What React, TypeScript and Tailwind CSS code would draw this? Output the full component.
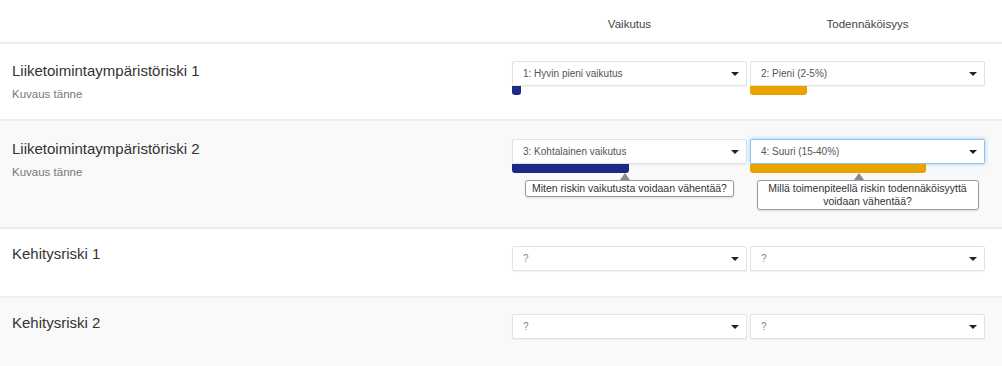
import React from "react";

type Opt = { text: string; placeholder?: boolean; bar?: number; color?: string; focus?: boolean };

function Caret() {
  return (
    <span className="w-0 h-0 border-l-[4px] border-r-[4px] border-t-[4px] border-l-transparent border-r-transparent border-t-[#222]" />
  );
}

function Select({ o }: { o: Opt }) {
  return (
    <div className="flex flex-col w-[235px]">
      <div
        className={
          "h-[25px] w-full flex items-center justify-between pl-[10px] pr-[7px] rounded-[2px] bg-white border " +
          (o.focus
            ? "border-[#8cc4ef] shadow-[0_0_4px_rgba(102,175,233,0.6)]"
            : "border-[#e2e2e2] shadow-[0_1px_1px_rgba(0,0,0,0.06)]")
        }
      >
        <span className={"text-[10px] " + (o.placeholder ? "text-[#888]" : "text-[#555]")}>{o.text}</span>
        <Caret />
      </div>
      {o.bar !== undefined && (
        <div className={"h-[9px] rounded-b-[3px] " + o.color} style={{ width: o.bar }} />
      )}
    </div>
  );
}

function Tooltip({ text, width, arrowLeft }: { text: React.ReactNode; width: number; arrowLeft: number }) {
  return (
    <div className="flex flex-col w-[235px]">
      <div
        className="w-0 h-0 border-l-[5px] border-r-[5px] border-b-[7px] border-l-transparent border-r-transparent border-b-[#8a8a8a]"
        style={{ marginLeft: arrowLeft }}
      />
      <div
        className="self-center bg-white border border-[#9a9a9a] rounded-[3px] py-[1px] text-center text-[10.5px] leading-[13px] text-[#333] shadow-[0_1px_2px_rgba(0,0,0,0.12)]"
        style={{ width }}
      >
        {text}
      </div>
    </div>
  );
}

function Row({
  title,
  desc,
  a,
  b,
  h,
  bg,
  padTitle,
  padSel,
  tips,
  border = true,
}: {
  title: string;
  desc?: string;
  a: Opt;
  b: Opt;
  h: number;
  bg: string;
  padTitle: number;
  padSel: number;
  tips?: boolean;
  border?: boolean;
}) {
  return (
    <div
      className={"flex " + bg + (border ? " border-b-2 border-[#eeeeee]" : "")}
      style={{ height: h }}
    >
      <div className="w-[512px] pl-[12px]" style={{ paddingTop: padTitle }}>
        <div className="text-[15px] leading-[17px] text-[#333]">{title}</div>
        {desc && <div className="mt-[9px] text-[11.5px] leading-[13px] text-[#777]">{desc}</div>}
      </div>
      <div className="flex flex-col" style={{ paddingTop: padSel }}>
        <div className="flex gap-[3px]">
          <Select o={a} />
          <Select o={b} />
        </div>
        {tips && (
          <div className="flex gap-[3px]">
            <Tooltip text="Miten riskin vaikutusta voidaan vähentää?" width={209} arrowLeft={108} />
            <Tooltip
              text={
                <>
                  Millä toimenpiteellä riskin todennäköisyyttä
                  <br />
                  voidaan vähentää?
                </>
              }
              width={222}
              arrowLeft={104}
            />
          </div>
        )}
      </div>
    </div>
  );
}

export default function App() {
  return (
    <div className="w-[1002px] h-[366px] overflow-hidden bg-white [font-family:'Liberation_Sans',Arial,sans-serif]">
      <div className="flex h-[44px] border-b-2 border-[#eeeeee]">
        <div className="w-[512px]" />
        <div className="flex gap-[3px] pt-[18px]">
          <div className="w-[235px] text-center text-[11.5px] leading-[13px] text-[#444]">Vaikutus</div>
          <div className="w-[235px] text-center text-[11.5px] leading-[13px] text-[#444]">Todennäköisyys</div>
        </div>
      </div>
      <Row
        title="Liiketoimintaympäristöriski 1"
        desc="Kuvaus tänne"
        a={{ text: "1: Hyvin pieni vaikutus", bar: 9, color: "bg-[#1c2a86]" }}
        b={{ text: "2: Pieni (2-5%)", bar: 57, color: "bg-[#e9a200]" }}
        h={77}
        bg="bg-white"
        padTitle={18}
        padSel={17}
      />
      <Row
        title="Liiketoimintaympäristöriski 2"
        desc="Kuvaus tänne"
        a={{ text: "3: Kohtalainen vaikutus", bar: 117, color: "bg-[#1c2a86]" }}
        b={{ text: "4: Suuri (15-40%)", bar: 176, color: "bg-[#e9a200]", focus: true }}
        h={108}
        bg="bg-[#f9f9f9]"
        padTitle={19}
        padSel={18}
        tips
      />
      <Row
        title="Kehitysriski 1"
        a={{ text: "?", placeholder: true }}
        b={{ text: "?", placeholder: true }}
        h={69}
        bg="bg-white"
        padTitle={16}
        padSel={17}
      />
      <Row
        title="Kehitysriski 2"
        a={{ text: "?", placeholder: true }}
        b={{ text: "?", placeholder: true }}
        h={68}
        bg="bg-[#f9f9f9]"
        padTitle={16}
        padSel={16}
        border={false}
      />
    </div>
  );
}
